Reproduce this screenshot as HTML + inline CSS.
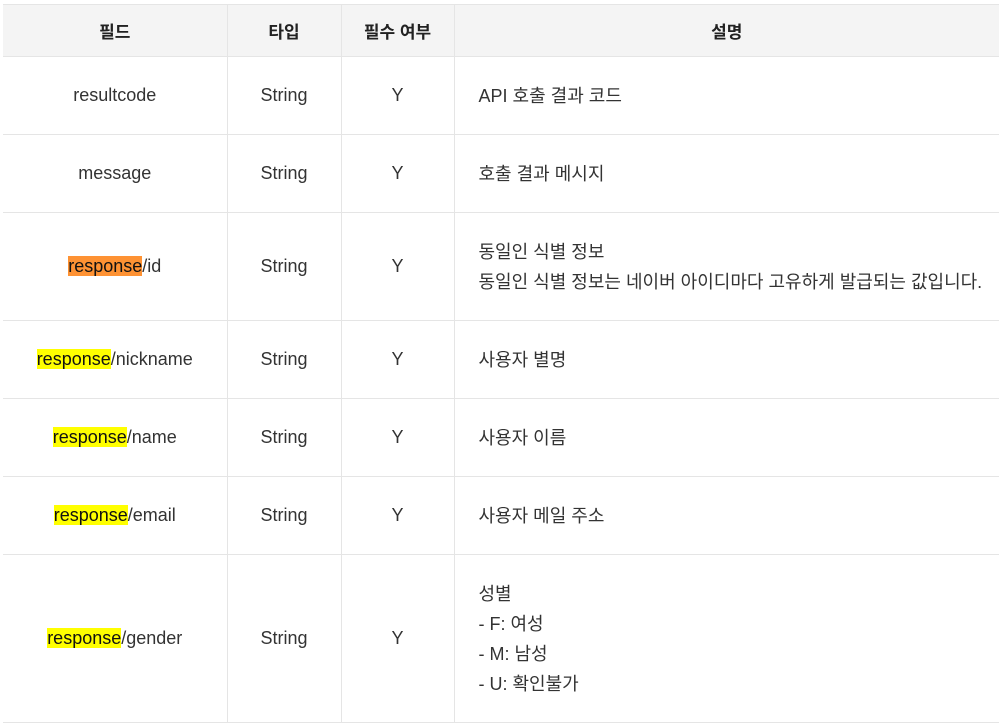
<!DOCTYPE html>
<html><head><meta charset="utf-8"><style>
body{margin:0;background:#fff;width:999px;height:716px;overflow:hidden}
table{position:absolute;left:3px;top:4px;border-collapse:collapse;width:996px;table-layout:fixed;font-family:"Liberation Sans","Noto Sans CJK KR",sans-serif;font-size:18px;color:#333}
td,th{border:1px solid #e5e5e5;text-align:center;vertical-align:middle;padding:0}
th{background:#f4f4f4;font-weight:bold;height:51px;color:#222;font-size:17px}
td.d{text-align:left;padding-left:24px;line-height:30px}
tr{border-left:none}
td:first-child,th:first-child{border-left:none}
td:last-child,th:last-child{border-right:none}
.o{background:#fe9233;color:#111}
.y{background:#ffff00;color:#111}
</style></head><body>
<table>
<colgroup><col style="width:224px"><col style="width:114px"><col style="width:113px"><col></colgroup>
<tr><th>필드</th><th>타입</th><th>필수 여부</th><th>설명</th></tr>
<tr style="height:78px"><td>resultcode</td><td>String</td><td>Y</td><td class="d">API 호출 결과 코드</td></tr>
<tr style="height:78px"><td>message</td><td>String</td><td>Y</td><td class="d">호출 결과 메시지</td></tr>
<tr style="height:108px"><td><span class="o">response</span>/id</td><td>String</td><td>Y</td><td class="d">동일인 식별 정보<br>동일인 식별 정보는 네이버 아이디마다 고유하게 발급되는 값입니다.</td></tr>
<tr style="height:78px"><td><span class="y">response</span>/nickname</td><td>String</td><td>Y</td><td class="d">사용자 별명</td></tr>
<tr style="height:78px"><td><span class="y">response</span>/name</td><td>String</td><td>Y</td><td class="d">사용자 이름</td></tr>
<tr style="height:78px"><td><span class="y">response</span>/email</td><td>String</td><td>Y</td><td class="d">사용자 메일 주소</td></tr>
<tr style="height:168px"><td><span class="y">response</span>/gender</td><td>String</td><td>Y</td><td class="d">성별<br>- F: 여성<br>- M: 남성<br>- U: 확인불가</td></tr>
</table>
</body></html>
